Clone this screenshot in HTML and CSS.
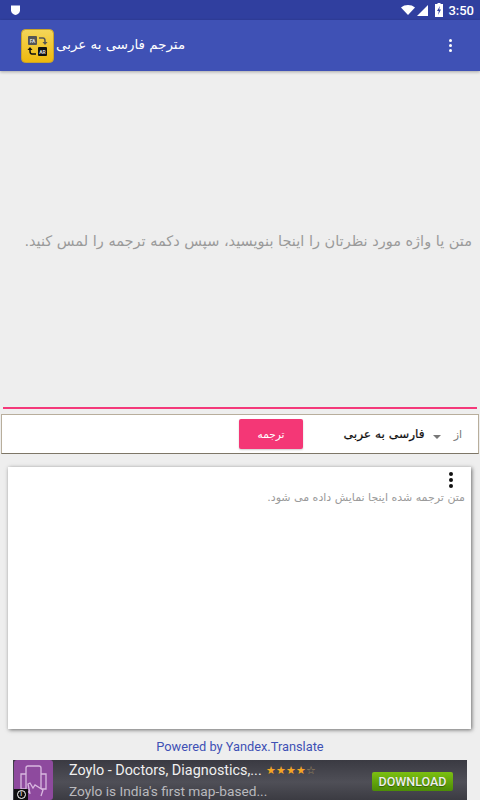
FILE: index.html
```html
<!DOCTYPE html>
<html lang="fa">
<head>
<meta charset="utf-8">
<title>مترجم فارسی به عربی</title>
<link rel="stylesheet" href="styles.css">
</head>
<body>
<div class="screen">
  <div class="statusbar">
    <svg class="shield" width="12" height="12" viewBox="0 0 12 12"><path d="M1 1.500h9v5c0 2.500-2.500 4-4.500 4.500C3.500 10.500 1 9 1 6.500z" fill="#fff"/></svg>
    <div class="status-right">
      <svg width="14" height="10" viewBox="0 0 14 10"><path d="M0 2.500C3.800-.8 10.200-.8 14 2.500L7 10z" fill="#fff"/></svg>
      <svg class="signal" width="11" height="11" viewBox="0 0 11 11"><path d="M11 0v11H0z" fill="#fff"/></svg>
      <svg class="battery" width="8" height="14" viewBox="0 0 8 14"><path d="M2.500 0h3v1H8v13H0V1h2.500z" fill="#fff"/><path d="M5 3L2 8h1.800L3 12l3-5.500H4.200z" fill="#303f9f"/></svg>
      <span class="clock">3:50</span>
    </div>
  </div>
  <header class="appbar">
    <div class="app-left">
      <svg class="logo" width="33" height="34" viewBox="0 0 33 34">
        <defs><linearGradient id="lg" x1="0" y1="0" x2="0" y2="1"><stop offset="0" stop-color="#f4d65a"/><stop offset="1" stop-color="#eeb80c"/></linearGradient></defs>
        <rect x=".5" y=".5" width="32" height="33" rx="4" fill="url(#lg)" stroke="#c9a32a"/>
        <rect x="7" y="7" width="9" height="9" rx="1" fill="#555"/>
        <rect x="17" y="18" width="9" height="9" rx="1" fill="#111"/>
        <text class="logo-text" x="11.500" y="13.500">FA</text>
        <text class="logo-text" x="21.500" y="24.500">AR</text>
        <path d="M18 9h4q2 0 2 3v2" fill="none" stroke="#555" stroke-width="1.500"/>
        <path d="M21.500 13h5l-2.500 3z" fill="#555"/>
        <path d="M15 25h-4q-2 0-2-3v-2" fill="none" stroke="#111" stroke-width="1.500"/>
        <path d="M6.500 21h5l-2.500-3z" fill="#111"/>
      </svg>
      <h1 class="title" dir="rtl">مترجم فارسی به عربی</h1>
    </div>
    <div class="kebab kebab-light"><i></i><i></i><i></i></div>
  </header>
  <section class="input-area">
    <p class="hint" dir="rtl">متن یا واژه مورد نظرتان را اینجا بنویسید، سپس دکمه ترجمه را لمس کنید.</p>
  </section>
  <div class="input-line"></div>
  <div class="controls">
    <button class="translate">ترجمه</button>
    <div class="spinner">
      <span class="spin-value" dir="rtl">فارسی به عربی</span>
      <svg class="caret" width="8" height="4" viewBox="0 0 8 4"><path d="M0 0h8L4 4z" fill="#777"/></svg>
      <span class="from">از</span>
    </div>
  </div>
  <section class="output">
    <div class="kebab kebab-dark"><i></i><i></i><i></i></div>
    <p class="output-text" dir="rtl">متن ترجمه شده اینجا نمایش داده می شود.</p>
  </section>
  <div class="powered">Powered by Yandex.Translate</div>
  <div class="ad">
    <div class="ad-icon">
      <svg width="39" height="40" viewBox="0 0 39 40"><rect width="39" height="40" rx="3" fill="#8e4a9e"/>
        <g fill="none" stroke="#d9b8e0" stroke-width="1.300"><rect x="12" y="6" width="15" height="26" rx="2"/><path d="M12 14H7v15h5M27 14h5v15h-5"/><path d="M16 34l-2-10 2-1 3 5 2-3 8 5-2 6" fill="#8e4a9e"/></g></svg>
      <span class="ad-info"><span class="ad-info-ring">i</span></span>
    </div>
    <div class="ad-text">
      <div class="ad-head"><span>Zoylo - Doctors, Diagnostics,...</span><span class="stars">★★★★<b>☆</b></span></div>
      <div class="ad-sub">Zoylo is India's first map-based...</div>
    </div>
    <div class="download">DOWNLOAD</div>
  </div>
</div>
</body>
</html>
```
FILE: styles.css
```css
html, body { margin: 0; padding: 0; }
.screen {
  width: 480px; height: 800px; overflow: hidden;
  display: flex; flex-direction: column;
  background: #eeeeee;
  font-family: "DejaVu Sans", sans-serif;
}
.statusbar {
  height: 20px; flex: none; background: #303f9f;
  display: flex; align-items: center; justify-content: space-between;
  padding: 0 6px 0 10px; color: #fff;
}
.shield { display: block; }
.status-right { display: flex; align-items: center; gap: 2px; }
.battery { margin: 0 3px 0 5px; }
.clock { font: 500 13px Roboto, sans-serif; }
.appbar {
  height: 51px; flex: none; background: #3f51b5;
  display: flex; align-items: center; justify-content: space-between;
  padding: 0 28px 0 21px;
  box-shadow: 0 1px 3px rgba(0,0,0,.3);
  position: relative;
}
.app-left { display: flex; align-items: center; gap: 2px; }
.logo { display: block; }
.logo-text { font: 700 5px Roboto, sans-serif; fill: #ddd; text-anchor: middle; }
.title { margin: -3px 0 0; font-size: 13.400px; font-weight: 400; color: #fff; }
.kebab { display: flex; flex-direction: column; align-items: center; }
.kebab i { display: block; border-radius: 50%; }
.kebab-light { gap: 2px; }
.kebab-light i { width: 3px; height: 3px; background: #fff; }
.kebab-dark { gap: 2px; position: absolute; top: 5px; right: 18px; }
.kebab-dark i { width: 4px; height: 4px; background: #111; }
.input-area {
  flex: none; height: 336px; display: flex; align-items: center;
  justify-content: flex-end; padding: 4px 8px 0 0; box-sizing: border-box;
}
.hint { margin: 0; font-size: 14.500px; color: #9a9a9a; white-space: nowrap; }
.input-line { flex: none; height: 2px; margin: 0 3px; background: #f4397a; }
.controls {
  flex: none; height: 40px; margin: 5px 1px 0; box-sizing: border-box;
  background: #fff; border: 1px solid #b8ae9c; border-bottom: 1px solid #7d7667;
  display: flex; align-items: center; justify-content: space-between;
  padding: 0 16px 0 237px;
}
.translate {
  width: 64px; height: 30px; border: 0; border-radius: 2px; padding: 0;
  background: #f43776; color: #fff; font: 10.500px "DejaVu Sans", sans-serif;
  box-shadow: 0 1px 2px rgba(0,0,0,.2);
}
.spinner { display: flex; align-items: center; }
.spin-value { font-size: 12.200px; font-weight: 500; color: #111; -webkit-text-stroke: .2px #111; }
.caret { margin: 5px 0 0 8px; }
.from { margin-left: 13px; font-size: 11px; color: #777; }
.output {
  flex: none; height: 262px; margin: 13px 9px 0 8px; background: #fff;
  position: relative;
  box-shadow: 1px 1px 4px rgba(0,0,0,.55);
}
.output-text { margin: 0; padding: 24px 6px 0 0; font-size: 11px; line-height: 14px; color: #9a9a9a; }
.powered {
  flex: none; height: 31px; padding-top: 4px; box-sizing: border-box;
  display: flex; align-items: center; justify-content: center;
  font: 12.800px Roboto, sans-serif; color: #3f51b5;
}
.ad {
  flex: none; height: 40px; margin: 0 13px; box-sizing: border-box;
  background: linear-gradient(#3a3a42, #4f4f57 55%, #3b3b42);
  display: flex; align-items: center; font-family: Roboto, sans-serif;
}
.ad-icon { width: 39px; height: 40px; margin-left: 1px; position: relative; flex: none; }
.ad-icon svg { display: block; }
.ad-info {
  position: absolute; left: 0; bottom: 0; width: 14px; height: 11px;
  background: #111; display: flex; align-items: center; justify-content: center;
}
.ad-info-ring {
  width: 9px; height: 9px; border: 1px solid #fff; border-radius: 50%; box-sizing: border-box;
  color: #fff; font: 7px/7px Roboto, sans-serif; text-align: center;
}
.ad-text { margin-left: 16px; flex: 1; padding-top: 1px; }
.ad-head { font-size: 14.400px; line-height: 20px; color: #f0f0f0; display: flex; gap: 4px; white-space: nowrap; }
.stars { color: #f5a623; font-size: 11px; letter-spacing: 0; }
.stars b { font-weight: 400; color: #a08a60; }
.ad-sub { font-size: 13.700px; line-height: 20px; color: #b9b9bd; white-space: nowrap; }
.download {
  flex: none; width: 81px; height: 19px; margin: 2px 14px 0 0; border-radius: 2px;
  background: linear-gradient(#7cc012, #4c8c06);
  color: #eee; font-size: 12.500px; font-weight: 500; line-height: 19px; text-align: center;
  text-shadow: 0 1px 1px rgba(0,0,0,.4);
}
```
